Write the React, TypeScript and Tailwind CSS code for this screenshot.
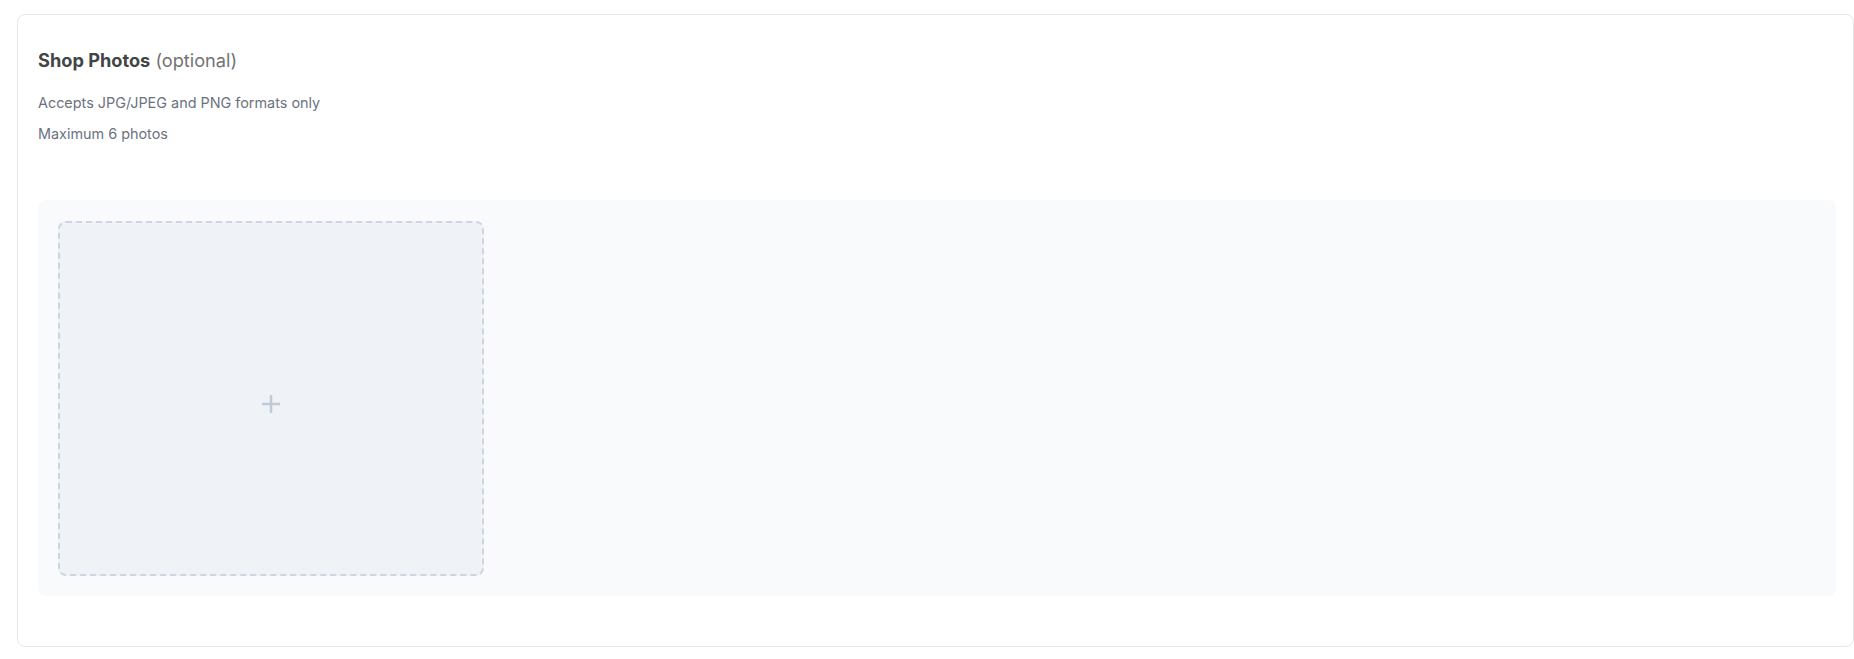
export default function App() {
  return (
    <div className="min-h-screen bg-white pl-[17px] pt-[14px] font-['Inter',sans-serif]">
      <section className="w-[1837px] rounded-lg border border-[#e5e7eb] bg-white pb-[50px] pl-5 pr-[17px] pt-[31px]">
        <h2 className="text-[18.2px] leading-7 text-[#444444]">
          <span className="font-bold">Shop Photos</span>{' '}
          <span className="font-normal text-[#737373]">(optional)</span>
        </h2>
        <p className="mt-[19px] text-[14.4px] leading-5 text-[#6b7280]">Accepts JPG/JPEG and PNG formats only</p>
        <p className="mt-[11px] text-[14.4px] leading-5 text-[#6b7280]">Maximum 6 photos</p>

        <div className="mt-[56px] rounded-lg bg-[#f9fafb] px-5 pb-5 pt-[21px]">
          <button
            type="button"
            className="flex h-[355px] w-[426px] items-center justify-center rounded-lg border-2 border-dashed border-[#cdd5e0] bg-[#eff2f7]"
          >
            <svg viewBox="0 0 20 20" className="mt-[11px] h-5 w-5 text-[#c2cad8]" fill="none" stroke="currentColor" strokeWidth={2.6}>
              <path d="M10 1v18M1 10h18" />
            </svg>
          </button>
        </div>
      </section>
    </div>
  );
}
